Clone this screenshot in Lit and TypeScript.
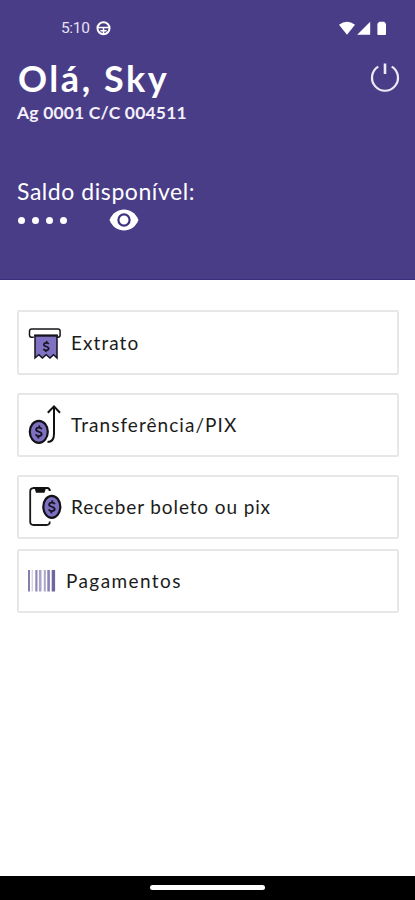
import { LitElement, html, css, svg } from "lit";
import { customElement } from "lit/decorators.js";

const coin = (cx: number, cy: number, rx: number, ry: number) => svg`
  <ellipse cx=${cx} cy=${cy} rx=${rx} ry=${ry} fill="#7e6fc0" stroke="#111118" stroke-width="2.2"/>
  <path transform="translate(${cx} ${cy})" d="M3.1-2.6C2-4.8-2.6-4.8-2.7-2.1C-2.7 .5 2.9-.6 2.9 2.4C2.6 5-2 4.9-3.1 2.6M.6-6.4L.2-4M-.2 4.2L-.6 6.6"
    fill="none" stroke="#15131f" stroke-width="1.8"/>`;

const receiptIcon = html`<svg width="36" height="40" viewBox="0 0 36 40">
  <path d="M6.5 16H4.2Q2.2 16 2.2 13.8V10Q2.2 7.8 4.4 7.8H30.6Q32.8 7.8 32.8 10V13.8Q32.8 16 30.8 16H29" transform="translate(-.7 -1.7)" fill="#fff" stroke="#16161a" stroke-width="1.5"/>
  <path d="M7 12.8H29V35L25.6 31.8L22 35L18.2 31.8L14.4 35L10.8 31.8L7 35Z" fill="#8171c2" stroke="#15131f" stroke-width="1.5"/>
  <path d="M6.2 12.4H29.8" stroke="#15131f" stroke-width="2"/>
  <path d="M20.8 21C19.6 19.2 15.9 19.6 15.8 21.8C15.7 24 20.7 23 20.7 25.5C20.6 27.8 16.6 27.8 15.4 26M18.9 18L18.4 20M18 27.2L17.6 29" fill="none" stroke="#15131f" stroke-width="1.7"/>
</svg>`;

const transferIcon = html`<svg width="36" height="44" viewBox="0 0 36 44">
  ${coin(10.8, 28.8, 9, 11)}
  <path d="M19.5 39Q26 39 26 31V4M19.8 9.8L26 3.4L32 9.8" fill="none" stroke="#111114" stroke-width="2"/>
</svg>`;

const phoneIcon = html`<svg width="36" height="42" viewBox="0 0 36 42">
  <path d="M7 2.2H5.5Q2.2 2.2 2.2 5.5V35.5Q2.2 39 5.5 39H18.5Q21.8 39 21.8 35.5" fill="none" stroke="#18181b" stroke-width="1.8"/>
  <path d="M5 2H19Q21.8 2.2 21.8 5" fill="none" stroke="#111114" stroke-width="2"/>
  <path d="M6.5 2H18L16.5 6.8H8Z" fill="#111114"/>
  ${coin(23.8, 20.8, 8.5, 11)}
</svg>`;

const barcodeIcon = html`<svg width="28" height="22" viewBox="0 0 28 22">
  <path d="M1 0V21.5" stroke="#857fae" stroke-width="2"/>
  <path d="M4.3 0V21.5" stroke="#d6d2e6" stroke-width="1.4"/>
  <path d="M8.4 0V21.5" stroke="#8f88b8" stroke-width="2.2"/>
  <path d="M12.2 0V21.5" stroke="#aaa4c9" stroke-width="2.6"/>
  <path d="M16.8 0V21.5" stroke="#aaa5ca" stroke-width="2"/>
  <path d="M20.6 0V21.5" stroke="#8a83b4" stroke-width="2.6"/>
  <path d="M25.4 0V21.5" stroke="#6f669f" stroke-width="3.4"/>
</svg>`;

@customElement("app-root")
export class AppRoot extends LitElement {
  static styles = css`
    :host { display: flex; flex-direction: column; width: 100%; height: 900px; background: #fff;
      font-family: Lato, "Open Sans", sans-serif; }
    svg { display: block; flex: none; }
    header { height: 280px; box-sizing: border-box; background: #4a3d87; color: #fff;
      border-bottom: 1px solid #3b2f80; display: flex; flex-direction: column; padding: 0 15px 0 17px; }
    .status { display: flex; align-items: center; height: 56px; padding: 0 13px 0 44px; }
    .time { font: 15.5px/20px Roboto, sans-serif; letter-spacing: -0.35px; color: #e6e2f3; width: 35px; }
    .signals { margin-left: auto; }
    .top { display: flex; justify-content: space-between; height: 45px; }
    h1 { margin: 0 0 0 1px; font-size: 36px; line-height: 44px; font-weight: 700; letter-spacing: 2.55px; white-space: nowrap; }
    .power { margin-top: 6px; }
    .account { font-size: 17.5px; line-height: 24px; font-weight: 700; color: #f3f0fb; white-space: nowrap; letter-spacing: 0.17px; }
    .label { margin-top: 52px; font-size: 23px; line-height: 28px; white-space: nowrap; letter-spacing: 0.56px; }
    .balance { display: flex; align-items: center; height: 30px; }
    .dots { display: flex; gap: 7px; padding-left: 1px; width: 91px; }
    .dots i { width: 7px; height: 7px; border-radius: 50%; background: #fff; }
    main { flex: 1; padding: 30px 16px 0 17px; display: flex; flex-direction: column; gap: 18px; }
    .card { box-sizing: border-box; height: 65px; border: 2px solid #e7e7e7; border-radius: 2px;
      display: flex; align-items: center; padding-left: 9px; color: #1c1c1c; }
    .card span { font-size: 19px; line-height: 26px; white-space: nowrap; margin-left: 7px; letter-spacing: 1.05px; }
    .card + .card { height: 64px; }
    .card.pay { margin-top: -8px; }
    .card.pay span { margin-left: 10px; letter-spacing: 1.4px; }
    .card .t3 { letter-spacing: 0.88px; }
    footer { height: 24px; background: #000; display: flex; justify-content: center; align-items: center; }
    .pill { width: 115px; height: 5px; border-radius: 3px; background: #fff; margin-bottom: 1px; }
  `;

  render() {
    return html`
      <header>
        <div class="status">
          <span class="time">5:10</span>
          <svg width="15" height="15" viewBox="0 0 15 15" fill="none" stroke="#fff"><circle cx="7.5" cy="7.2" r="6" stroke-width="2"/><path d="M2 6.6H13M7.5 7V13M4.4 9.8H10.6" stroke-width="1.5"/></svg>
          <svg class="signals" width="48" height="15" viewBox="0 0 48 15" fill="#fff">
            <path d="M0 3.8Q8-2.4 16 3.8L8 13.8Z"/><path d="M31.2 .8V13.8H18.2Z"/><path d="M40.2 0.8H45.2L47 2.8V13Q47 14 46 14H39.4Q38.4 14 38.4 13V2.8Z"/>
          </svg>
        </div>
        <div class="top">
          <h1>Olá, Sky</h1>
          <svg class="power" width="30" height="30" viewBox="0 0 30 30" fill="none" stroke="#eeeaf8" stroke-width="2.2"><path d="M8.3 4.6A13 13 0 1 0 21.7 4.6"/><path d="M15 1.5V12" stroke-width="2.6"/></svg>
        </div>
        <div class="account">Ag 0001 C/C 004511</div>
        <div class="label">Saldo disponível:</div>
        <div class="balance">
          <div class="dots"><i></i><i></i><i></i><i></i></div>
          <svg width="30" height="22" viewBox="0 0 30 22"><path d="M0.5 11C6-3 24-3 29.5 11C24 25 6 25 .5 11Z" fill="#fff"/><circle cx="15" cy="11" r="5.6" fill="#fff" stroke="#3f3280" stroke-width="2.2"/></svg>
        </div>
      </header>
      <main>
        <div class="card">${receiptIcon}<span>Extrato</span></div>
        <div class="card">${transferIcon}<span>Transferência/PIX</span></div>
        <div class="card">${phoneIcon}<span class="t3">Receber boleto ou pix</span></div>
        <div class="card pay">${barcodeIcon}<span>Pagamentos</span></div>
      </main>
      <footer><div class="pill"></div></footer>
    `;
  }
}
